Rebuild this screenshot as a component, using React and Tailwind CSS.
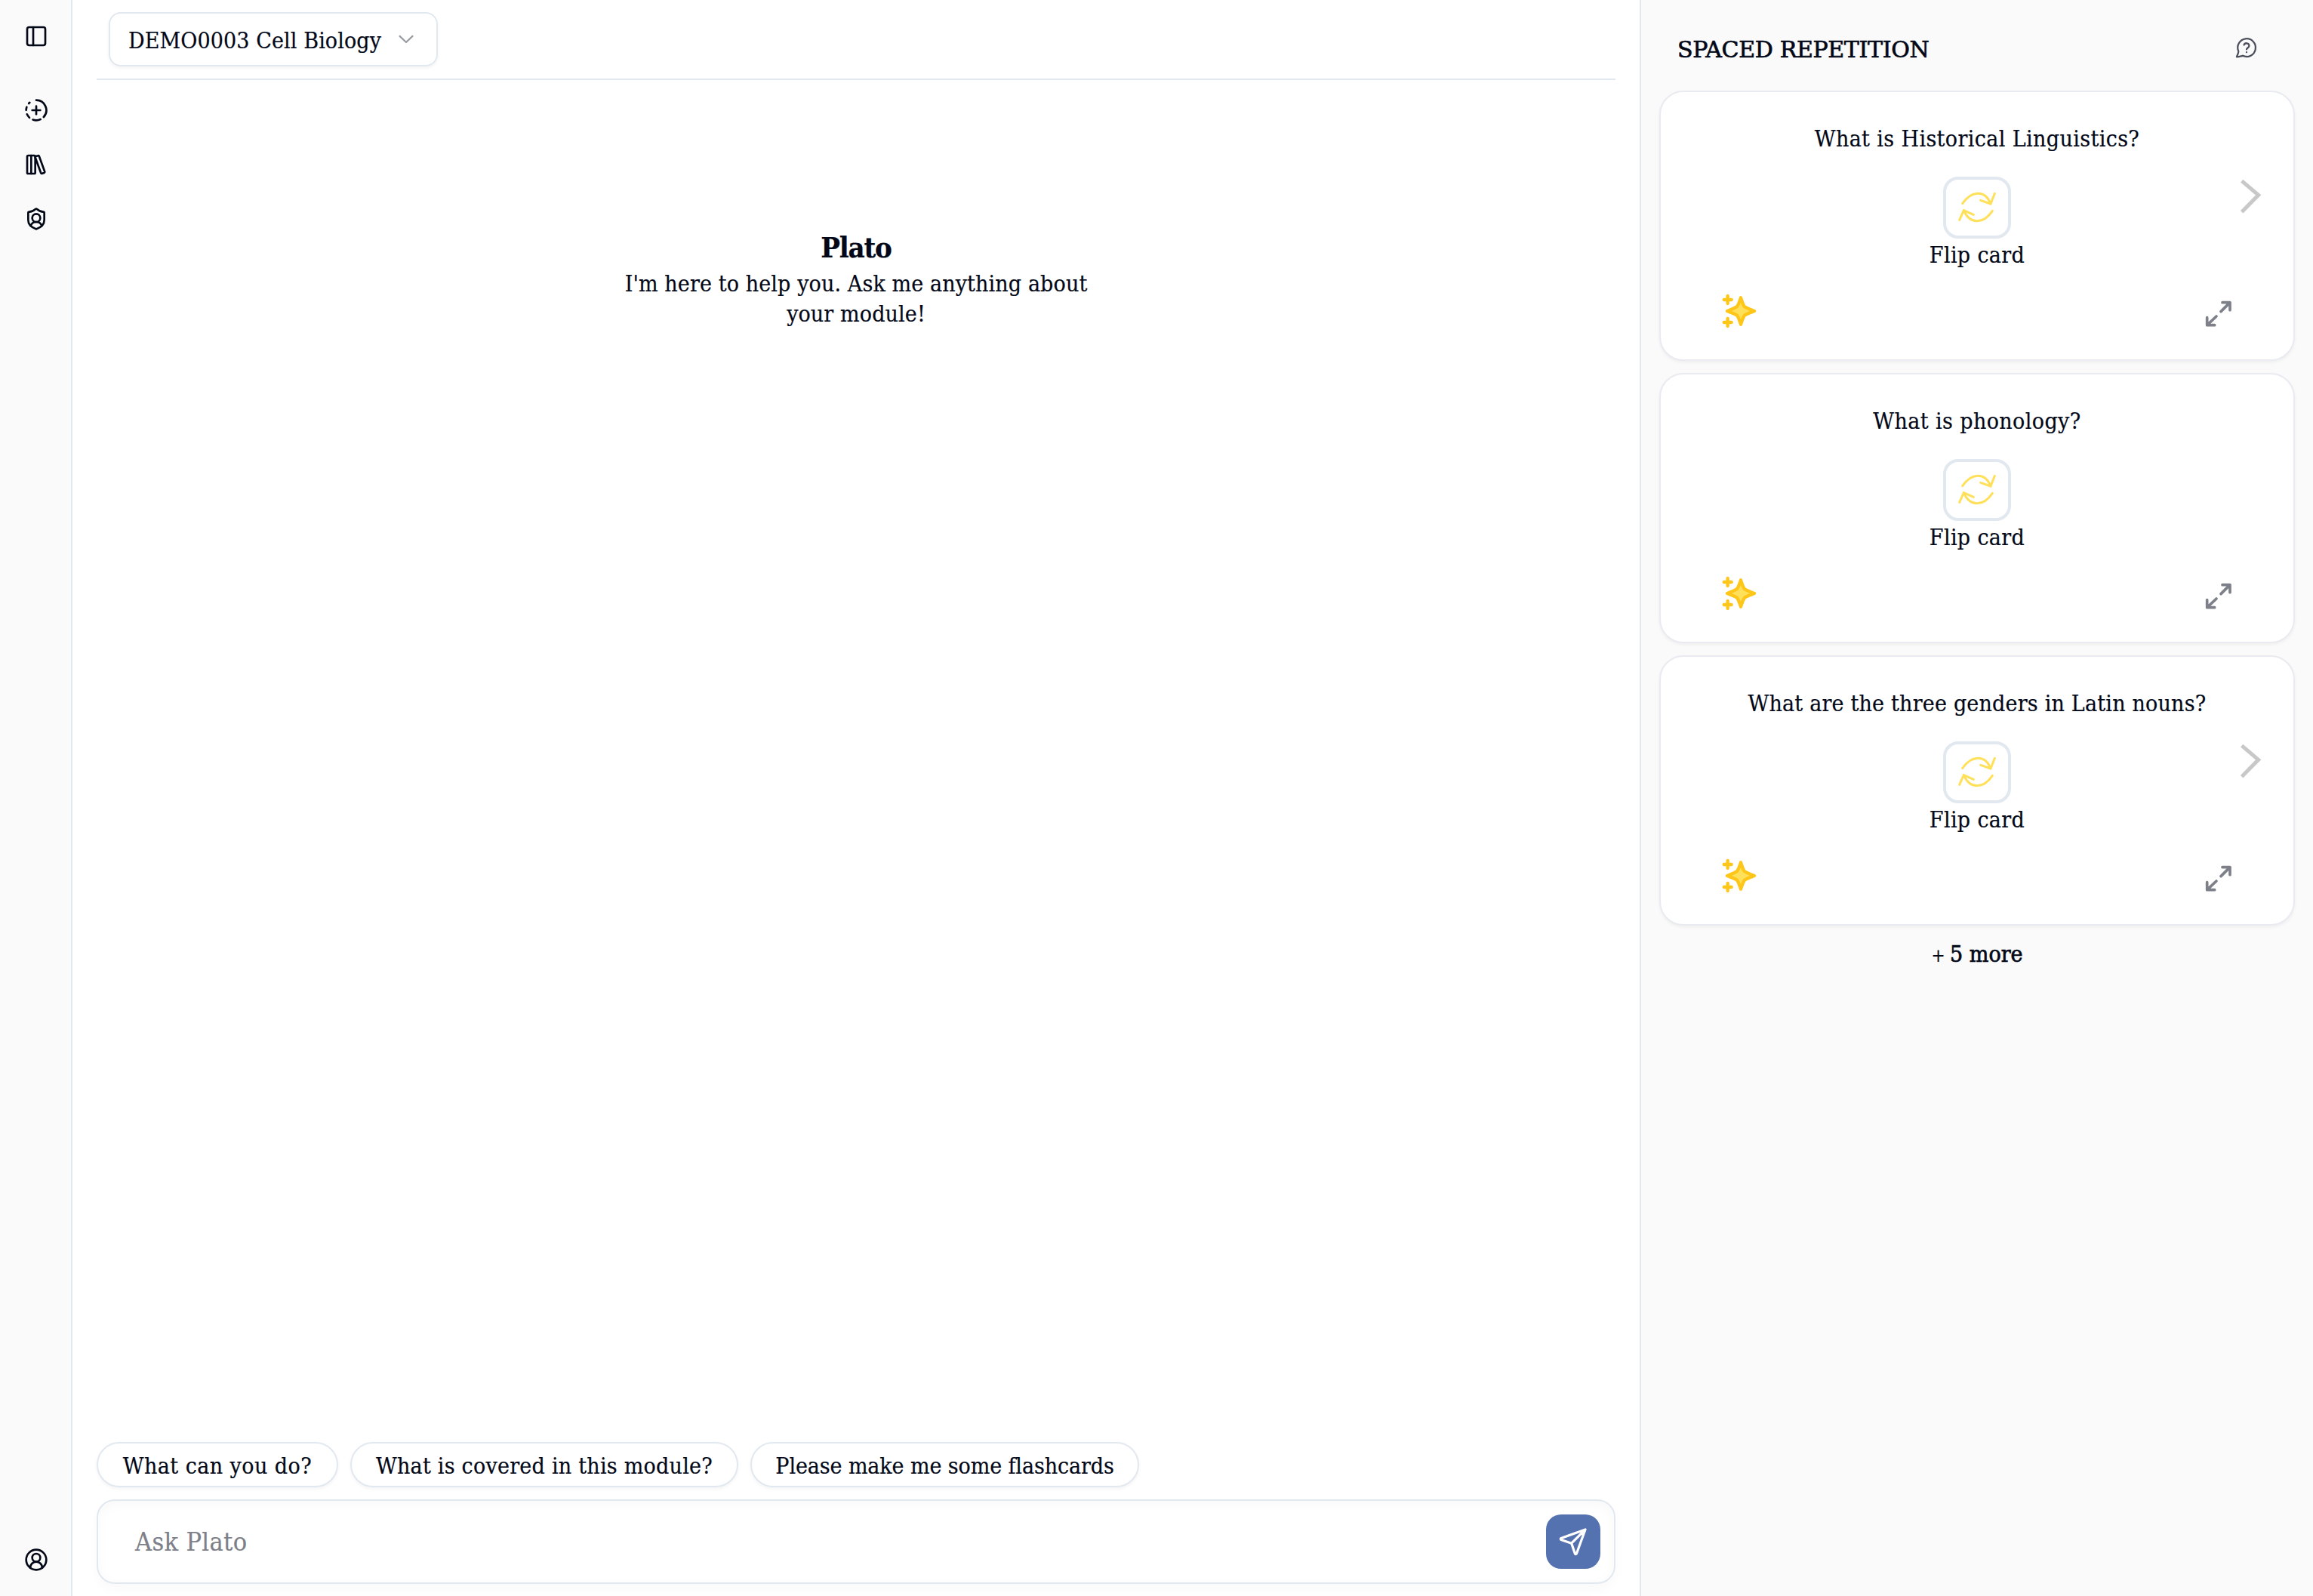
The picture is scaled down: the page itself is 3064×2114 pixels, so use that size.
import {
  PanelLeft,
  CircleFadingPlus,
  LibraryBig,
  ShieldUser,
  CircleUserRound,
} from "lucide-react";

const cards = [
  { question: "What is Historical Linguistics?", tracking: "tracking-[0.38px]", next: true },
  { question: "What is phonology?", tracking: "tracking-[0.4px]", next: false },
  { question: "What are the three genders in Latin nouns?", tracking: "tracking-[0.2px]", next: true },
];

const suggestions = [
  { label: "What can you do?", box: "w-[320px]", tracking: "tracking-[0.45px]" },
  { label: "What is covered in this module?", box: "w-[514px]", tracking: "tracking-[0.25px]" },
  { label: "Please make me some flashcards", box: "w-[515px]", tracking: "tracking-[-0.1px]" },
];

function ChevronDownIcon() {
  return (
    <svg className="relative -top-0.5 h-8 w-8 shrink-0 opacity-40" viewBox="0 0 15 15" fill="currentColor">
      <path
        fillRule="evenodd"
        clipRule="evenodd"
        d="M3.13523 6.15803C3.3241 5.95657 3.64052 5.94637 3.84197 6.13523L7.5 9.56464L11.158 6.13523C11.3595 5.94637 11.6759 5.95657 11.8648 6.15803C12.0536 6.35949 12.0434 6.67591 11.842 6.86477L7.84197 10.6148C7.64964 10.7951 7.35036 10.7951 7.15803 10.6148L3.15803 6.86477C2.95657 6.67591 2.94637 6.35949 3.13523 6.15803Z"
      />
    </svg>
  );
}

function HelpIcon() {
  return (
    <svg
      className="mt-px h-8 w-8"
      viewBox="0 0 24 24"
      fill="none"
      stroke="currentColor"
      strokeWidth="1.7"
      strokeLinecap="round"
      strokeLinejoin="round"
    >
      <path d="M8.2 20.1A8.9 8.9 0 1 0 3.9 15.6C4.2 16.8 3.4 18.4 2.2 21.2C4.6 21.2 6.6 20.4 8.2 20.1A9 9 0 0 0 12 21" />
      <path d="M9.4 9.4a2.7 2.7 0 0 1 5.2 .8c0 1.8-2.6 2.4-2.6 3.6" />
      <path d="M12 16.6h.01" />
    </svg>
  );
}

function FlipIcon() {
  return (
    <svg
      className="h-[42px] w-[52px]"
      viewBox="158 132 156 126"
      fill="none"
      stroke="#ffe05a"
      strokeWidth="9"
      strokeLinecap="round"
      strokeLinejoin="round"
    >
      <path d="M178 179C212 128 268 122 290 180" />
      <path d="M306 139L290 180L250 166" />
      <path d="M297 208C262 260 208 264 183 206" />
      <path d="M166 244L183 206L222 223" />
    </svg>
  );
}

function SparklesIcon() {
  return (
    <svg
      className="h-12 w-12"
      viewBox="58 54 144 144"
      fill="none"
      stroke="#ffc61a"
      strokeWidth="13"
      strokeLinecap="round"
      strokeLinejoin="round"
    >
      <path
        fill="#ffe05a"
        d="M136 73C140 86 144 98 150 108C162 116 177 121 190 126C177 131 162 136 151 143C144 153 140 166 136 179C132 166 128 153 121 143C110 136 95 131 82 126C95 121 110 116 121 108C128 98 132 86 136 73Z"
      />
      <path d="M84 66V96M69 81H99" />
      <path d="M84 156V186M69 171H99" />
    </svg>
  );
}

function ExpandIcon() {
  return (
    <svg
      className="mt-[9px] h-[38px] w-[38px]"
      viewBox="120 562 114 114"
      fill="none"
      stroke="#7d8089"
      strokeWidth="11"
      strokeLinecap="round"
      strokeLinejoin="round"
    >
      <path d="M192 573H222V603M186 609L222 573" />
      <path d="M131 633V663H161M168 628L131 663" />
    </svg>
  );
}

function NextIcon() {
  return (
    <svg className="mt-0.5 mr-[41px] h-[47px] w-[30px] justify-self-end" viewBox="262 76 90 141" fill="none">
      <path d="M270 87L336 143L270 210" stroke="#c8c8c8" strokeWidth="15" />
    </svg>
  );
}

function SendIcon() {
  return (
    <svg
      className="h-[72px] w-[72px]"
      viewBox="0 0 72 72"
      fill="none"
      stroke="white"
      strokeWidth="3.2"
      strokeLinecap="round"
      strokeLinejoin="round"
    >
      <path d="M52 20L20 31.4Q18.6 32.4 20 33.6L33.7 38.2L38.4 52Q39.5 53.4 40.4 52L52 20L33.7 38.2" />
    </svg>
  );
}

function Flashcard({ question, tracking, next }) {
  return (
    <article className="flex h-[358px] flex-col rounded-[32px] border-2 border-[#e9ebf0] bg-white pt-[42px] shadow-[0_2px_4px_rgba(0,0,0,0.05)]">
      <h3 className={`text-center leading-10 ${tracking}`}>{question}</h3>
      <div className="mt-[30px] grid grid-cols-[1fr_auto_1fr]">
        <span />
        <div className="flex flex-col items-center">
          <button className="flex h-[82px] w-[90px] items-center justify-center rounded-[20px] border-4 border-[#e2e8f0]">
            <FlipIcon />
          </button>
          <span className="mt-0.5 leading-10 tracking-[0.35px]">Flip card</span>
        </div>
        {next ? <NextIcon /> : <span />}
      </div>
      <div className="mt-[30px] flex items-start justify-between px-20">
        <SparklesIcon />
        <ExpandIcon />
      </div>
    </article>
  );
}

export default function App() {
  return (
    <div className="flex h-[2114px] w-[3064px] overflow-hidden bg-white font-['DejaVu_Serif_Condensed','DejaVu_Serif',serif] text-[30px] text-[#020817] [-webkit-text-stroke:0.2px]">
      <nav className="flex w-24 shrink-0 flex-col items-center border-r-2 border-[#e2e8f0] bg-[#fafafa] pt-8 pb-8 pl-0.5">
        <PanelLeft size={32} />
        <div className="mt-[66px] flex flex-col gap-10">
          <CircleFadingPlus size={32} />
          <LibraryBig size={32} />
          <ShieldUser size={32} />
        </div>
        <CircleUserRound size={32} className="mt-auto" />
      </nav>

      <main className="flex min-w-0 flex-1 flex-col px-8 pb-4">
        <header className="flex h-[106px] shrink-0 items-start border-b-2 border-[#e2e8f0] px-4 pt-4">
          <button className="flex h-[72px] w-[436px] items-center justify-between rounded-2xl border-2 border-[#e2e8f0] px-6 whitespace-nowrap shadow-[0_2px_4px_rgba(0,0,0,0.05)]">
            <span className="pt-0.5 tracking-[0.1px]">DEMO0003 Cell Biology</span>
            <ChevronDownIcon />
          </button>
        </header>

        <section className="mt-[196px] flex flex-1 flex-col items-center text-center">
          <h1 className="text-[38px] leading-[52px] font-bold tracking-[-1.2px]">Plato</h1>
          <p className="mt-0.5 w-[640px] leading-10 tracking-[0.12px]">
            I'm here to help you. Ask me anything about your module!
          </p>
        </section>

        <div className="flex gap-4">
          {suggestions.map((s) => (
            <button
              key={s.label}
              className={`h-[60px] rounded-full border-2 border-[#e2e8f0] pt-0.5 whitespace-nowrap shadow-[0_2px_4px_rgba(0,0,0,0.05)] ${s.box} ${s.tracking}`}
            >
              {s.label}
            </button>
          ))}
        </div>

        <div className="mt-4 flex h-28 items-center justify-between rounded-3xl border-2 border-[#e2e8f0] pr-[18px] pl-[49px] shadow-[0_8px_16px_rgba(0,0,0,0.025),inset_0_4px_16px_rgba(0,0,0,0.03)]">
          <span className="pt-px text-[34px] tracking-[0.35px] text-[#7d8089]">Ask Plato</span>
          <button className="h-[72px] w-[72px] rounded-[20px] bg-[#5471b0]">
            <SendIcon />
          </button>
        </div>
      </main>

      <aside className="flex w-[892px] shrink-0 flex-col border-l-2 border-[#e2e8f0] bg-[#fafafa] px-6">
        <div className="flex h-[120px] items-start justify-between pt-[46px] pr-12 pl-6">
          <h2 className="font-['DejaVu_Serif',serif] leading-10 tracking-[-0.35px] [-webkit-text-stroke:0.7px]">
            SPACED REPETITION
          </h2>
          <span className="text-[#4b4f5c]">
            <HelpIcon />
          </span>
        </div>
        <div className="flex flex-col gap-4">
          {cards.map((c) => (
            <Flashcard key={c.question} {...c} />
          ))}
        </div>
        <p className="mt-[18px] text-center leading-10 [-webkit-text-stroke:0.7px]">
          <span className="mr-[-2px] text-[24px] [-webkit-text-stroke:0.2px]">+</span> 5 more
        </p>
      </aside>
    </div>
  );
}
